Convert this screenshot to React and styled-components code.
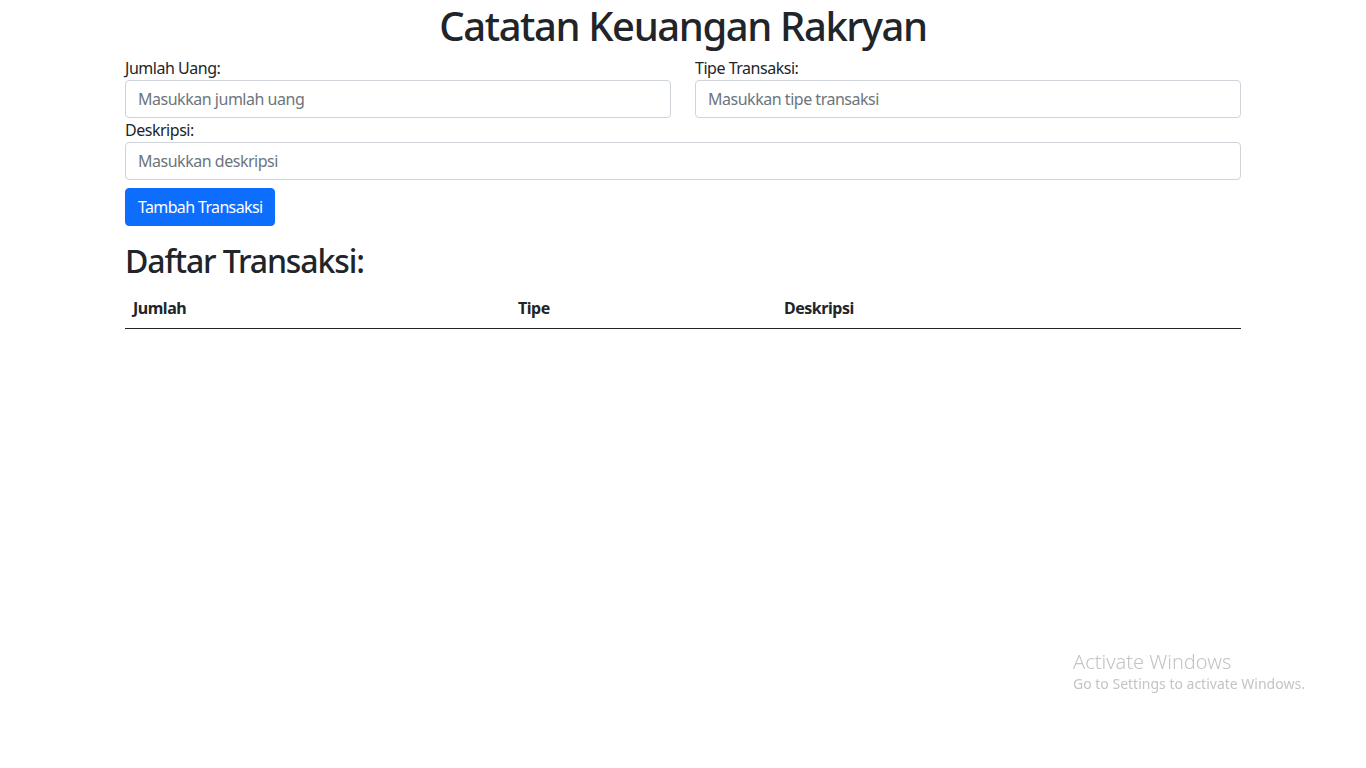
import React, { useState } from 'react';
import styled, { createGlobalStyle } from 'styled-components';

const GlobalStyle = createGlobalStyle`
  * { box-sizing: border-box; }
  body {
    margin: 0;
    background: #fff;
    color: #212529;
    font-family: "Noto Sans", "Open Sans", sans-serif;
    font-size: 16px;
    line-height: 1.5;
    letter-spacing: -0.03em;
  }
`;

const Container = styled.div`
  max-width: 1140px;
  margin: 0 auto;
  padding: 4px 12px 0;
`;

const Title = styled.h1`
  margin: 0 0 8px;
  height: 44px;
  font-size: 40px;
  font-weight: 500;
  line-height: 44px;
  letter-spacing: -0.035em;
  text-align: center;
`;

const FormRow = styled.div`
  display: grid;
  grid-template-columns: 1fr 1fr;
  column-gap: 24px;
`;

const Field = styled.div`
  grid-column: ${p => (p.$full ? '1 / -1' : 'auto')};
  display: flex;
  flex-direction: column;
`;

const Label = styled.label`
  font-size: 16px;
  line-height: 24px;
`;

const Input = styled.input`
  height: 38px;
  padding: 6px 12px;
  font: inherit;
  font-size: 16px;
  letter-spacing: -0.03em;
  color: #212529;
  border: 1px solid #ced4da;
  border-radius: 4px;
  outline: none;
  &::placeholder { color: #6c757d; }
`;

const SubmitButton = styled.button`
  margin-top: 8px;
  height: 38px;
  padding: 6px 12px;
  font: inherit;
  font-size: 16px;
  letter-spacing: -0.04em;
  color: #fff;
  background: #0d6efd;
  border: 1px solid #0d6efd;
  border-radius: 4px;
  cursor: pointer;
`;

const SubTitle = styled.h2`
  margin: 16px 0 8px;
  font-size: 32px;
  font-weight: 500;
  line-height: 1.2;
  letter-spacing: -0.035em;
`;

const Table = styled.table`
  width: 100%;
  border-collapse: collapse;
`;

const Th = styled.th`
  width: ${p => p.$w};
  padding: 8px;
  text-align: left;
  font-weight: 700;
  line-height: 24px;
  border-bottom: 1px solid #212529;
`;

const Watermark = styled.div`
  position: fixed;
  left: 1073px;
  top: 650px;
  color: #c4c4c4;
  font-family: "Noto Sans", sans-serif;
  letter-spacing: 0;
  pointer-events: none;
`;

const WatermarkTitle = styled.div`
  font-size: 20px;
  font-weight: 300;
  line-height: 24px;
`;

const WatermarkText = styled.div`
  font-size: 14px;
  line-height: 20px;
`;

export default function App() {
  const [transactions] = useState([]);

  return (
    <>
      <GlobalStyle />
      <Container>
        <Title>Catatan Keuangan Rakryan</Title>
        <FormRow>
          <Field>
            <Label>Jumlah Uang:</Label>
            <Input placeholder="Masukkan jumlah uang" />
          </Field>
          <Field>
            <Label>Tipe Transaksi:</Label>
            <Input placeholder="Masukkan tipe transaksi" />
          </Field>
          <Field $full>
            <Label>Deskripsi:</Label>
            <Input placeholder="Masukkan deskripsi" />
          </Field>
        </FormRow>
        <SubmitButton>Tambah Transaksi</SubmitButton>
        <SubTitle>Daftar Transaksi:</SubTitle>
        <Table>
          <thead>
            <tr>
              <Th $w="385px">Jumlah</Th>
              <Th $w="266px">Tipe</Th>
              <Th>Deskripsi</Th>
            </tr>
          </thead>
          <tbody>
            {transactions.map((t, i) => (
              <tr key={i}>
                <td>{t.amount}</td>
                <td>{t.type}</td>
                <td>{t.desc}</td>
              </tr>
            ))}
          </tbody>
        </Table>
      </Container>
      <Watermark>
        <WatermarkTitle>Activate Windows</WatermarkTitle>
        <WatermarkText>Go to Settings to activate Windows.</WatermarkText>
      </Watermark>
    </>
  );
}
